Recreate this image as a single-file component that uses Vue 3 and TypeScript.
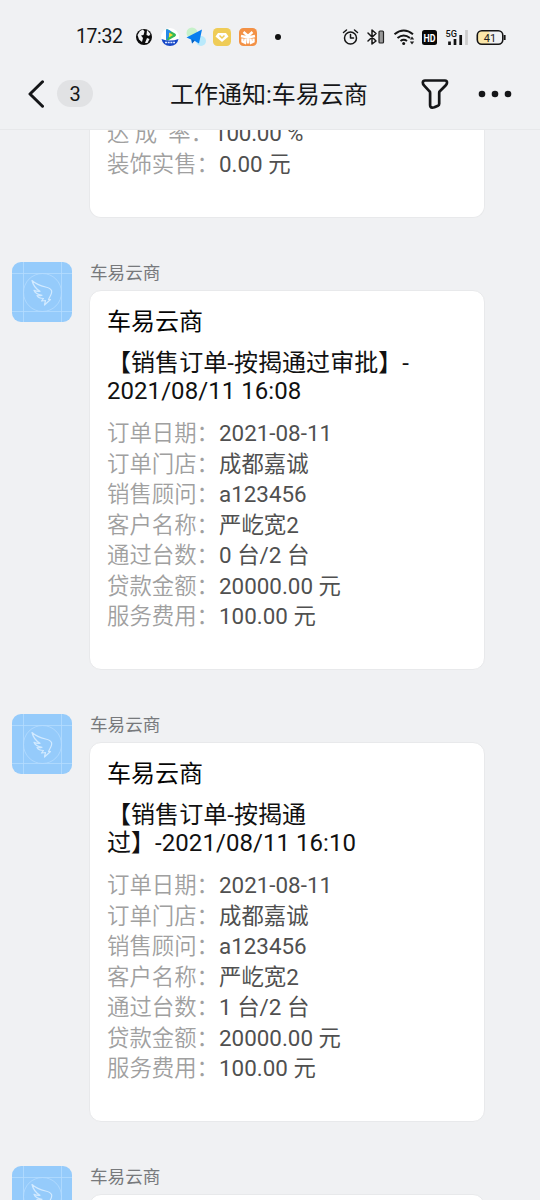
<script setup lang="ts">
interface Row {
  label: string
  value: string
}
interface Message {
  id: number
  title: string[]
  rows: Row[]
}

const sender = '车易云商'

const previousRows: Row[] = [
  { label: '达 成  率：', value: '100.00 %' },
  { label: '装饰实售：', value: '0.00 元' },
]

const orderRows = (passed: string): Row[] => [
  { label: '订单日期：', value: '2021-08-11' },
  { label: '订单门店：', value: '成都嘉诚' },
  { label: '销售顾问：', value: 'a123456' },
  { label: '客户名称：', value: '严屹宽2' },
  { label: '通过台数：', value: passed },
  { label: '贷款金额：', value: '20000.00 元' },
  { label: '服务费用：', value: '100.00 元' },
]

const messages: Message[] = [
  { id: 1, title: ['【销售订单-按揭通过审批】-', '2021/08/11 16:08'], rows: orderRows('0 台/2 台') },
  { id: 2, title: ['【销售订单-按揭通', '过】-2021/08/11 16:10'], rows: orderRows('1 台/2 台') },
  { id: 3, title: [], rows: [] },
]
</script>

<template>
  <div class="screen">
    <div class="status">
      <span class="clock">17:32</span>
      <svg class="apps" width="140" height="20" viewBox="0 0 140 20">
        <circle cx="9" cy="10" r="8" fill="#0b0b0b" />
        <path d="M5 4l3-1.500 1.500 2L8.500 8 6 8.500 8 11l-1 4-3-2.500L2.500 8zM12 3l3.500 4-1.500 2-2.500-1zM12 11l2.500 1-2 4-2.500 0z" fill="#f0f1f3" />
        <circle cx="35" cy="10" r="9" fill="#fff" />
        <path d="M31 3.500q0-2 2-1l7 4q2 1.500 0 3l-7 4q-2 .5-2-1.500z" fill="#35b957" />
        <path d="M31 3.500q0-2 2-1l3 1.800-4 8.700q-1-.3-1-1z" fill="#2789e8" />
        <path d="M34 5.500v5l4-2.500z" fill="#f8d935" />
        <path d="M26.500 12q8.500 3 17 0-1.500 7-8.500 7t-8.500-7z" fill="#1647c6" />
        <path d="M30 15.500h10" stroke="#dce7ff" stroke-width="1.500" stroke-dasharray="2 .7" />
        <circle cx="57" cy="6" r="5.500" fill="#c6f1c9" />
        <circle cx="66" cy="14" r="5" fill="#b9e9fb" />
        <path d="M51.500 10.500L67 2.500l-3 14-5-3-2 3-1-4z" fill="#087ff0" />
        <path d="M57 12.500l3 1-3 3z" fill="#0960bd" />
        <rect x="78" y="1" width="18" height="18" rx="4.500" fill="#efcc57" />
        <path d="M83 6h8l2.500 3.500L87 15l-6.500-5.500z" fill="#fff" />
        <path d="M84.500 8.500L87 11l2.500-2.500" fill="none" stroke="#efcc57" stroke-width="1.500" />
        <rect x="104" y="1" width="18" height="18" rx="4.500" fill="#f39145" />
        <g fill="none" stroke="#fff" stroke-width="2.400">
          <path d="M108.500 5l4.500 4 4.500-4M106 9l7 1.500 7-1.500M113 9v7.500M107.500 11.500v3l2.500 1.200.5-4M118.500 11.500v3l-2.500 1.200-.5-4" />
        </g>
      </svg>
      <i class="more-dot"></i>
      <svg class="system" width="166" height="22" viewBox="0 0 166 22">
        <g fill="none" stroke="#151515" stroke-width="1.500" stroke-linecap="round" stroke-linejoin="round">
          <circle cx="8.500" cy="12" r="6" />
          <path d="M8.500 8.500V12h3M1.500 6.500L4.500 4M12.500 4l3 2.500" />
          <path d="M26 7l8 8-4 3V4l4 3.500-8 7.500" />
        </g>
        <rect x="37" y="5" width="4.500" height="12" rx="1" fill="#999" stroke="#222" stroke-width="1.200" />
        <path d="M52.500 8.200q9.300-7.500 18.500 0M55.500 12q6.200-5 12.500 0M58.500 15q3.200-2.500 6.500 0" fill="none" stroke="#151515" stroke-width="2" />
        <circle cx="61.700" cy="17.500" r="1.500" fill="#151515" />
        <path d="M67.800 13.500l2.200-3 2.200 3zM67.800 15.500l2.200 3 2.200-3z" fill="#222" />
        <rect x="80" y="4" width="15" height="15" rx="2.500" fill="#080808" />
        <text x="87.500" y="15.500" text-anchor="middle" font-size="10.500" font-weight="700" textLength="12" lengthAdjust="spacingAndGlyphs" fill="#fff">HD</text>
        <text x="103.500" y="11" font-size="9.500" font-weight="500" textLength="11.500" lengthAdjust="spacingAndGlyphs" fill="#111">5G</text>
        <path d="M107.500 15.500V19M113 13v6M118.700 9v10" stroke="#111" stroke-width="2.700" />
        <path d="M124.500 4v15" stroke="#ccc" stroke-width="2.700" />
        <rect x="136" y="4.800" width="12" height="13.400" rx="4" fill="#fbe7a9" />
        <rect x="135.300" y="4.800" width="25.500" height="13.400" rx="4.500" fill="none" stroke="#151515" stroke-width="1.600" />
        <path d="M162.700 9v5" stroke="#151515" stroke-width="1.800" />
        <text x="148" y="15.500" text-anchor="middle" font-size="11" fill="#222">41</text>
      </svg>
    </div>

    <header class="nav">
      <svg class="back" width="17" height="28" viewBox="0 0 17 28">
        <path d="M15.500 1.800L3 14l12.500 12.200" fill="none" stroke="#151618" stroke-width="3" stroke-linecap="round" stroke-linejoin="round" />
      </svg>
      <span class="count">3</span>
      <h1>工作通知:车易云商</h1>
      <svg class="filter" width="28" height="32" viewBox="0 0 28 32">
        <path d="M4 2.500h20q2.200 0 2 2.300-.2 1.500-1.200 2.500l-6 6q-.6.600-.6 1.500v11q0 1.400-1.300 2l-3.500 1.500q-2.900 1-3.900-.5-.4-.7-.4-1.800V14.800q0-.9-.6-1.500l-5.500-6Q1.800 6.300 1.800 4.600 2 2.500 4 2.500z" fill="none" stroke="#151618" stroke-width="2.700" stroke-linejoin="round" />
      </svg>
      <svg class="dots" width="34" height="8" viewBox="0 0 34 8">
        <circle cx="4" cy="4" r="3.300" /><circle cx="17" cy="4" r="3.300" /><circle cx="30" cy="4" r="3.300" />
      </svg>
    </header>

    <main class="chat">
      <section class="card card-cut">
        <div v-for="row in previousRows" :key="row.label" class="row">
          <span class="label">{{ row.label }}</span><span class="value">{{ row.value }}</span>
        </div>
      </section>

      <article v-for="message in messages" :key="message.id" class="message">
        <svg class="avatar" width="60" height="60" viewBox="0 0 60 60">
          <rect width="60" height="60" rx="9" fill="#95cbfb" />
          <g fill="none" stroke="#b5dcff" stroke-width=".8">
            <path d="M0 11.500h60M0 49.500h60M11.500 0v60M49.500 0v60" />
            <circle cx="30.500" cy="30.500" r="19" />
          </g>
          <path d="M20 18.500q5 4.500 13.500 6.500 5 1.200 6 3.500.8 2-1.500 6l-1.500 3h2L32.500 43l1-4.500-4 .5 2-2.500q-5 0-6.500-3 3 .6 5-.2-6.500-1-8-5 3 1.500 6 1-6.500-4-8-10.800z" fill="none" stroke="#d2eaff" stroke-width="1.200" stroke-linejoin="round" />
        </svg>
        <div class="body">
          <div class="sender">{{ sender }}</div>
          <section class="card">
            <h2>{{ sender }}</h2>
            <h3><span v-for="line in message.title" :key="line">{{ line }}</span></h3>
            <div v-for="row in message.rows" :key="row.label" class="row">
              <span class="label">{{ row.label }}</span><span class="value">{{ row.value }}</span>
            </div>
          </section>
        </div>
      </article>
    </main>
  </div>
</template>

<style>
body {
  background: #f0f1f3;
}
</style>

<style scoped>
.screen {
  width: 540px;
  height: 1200px;
  overflow: hidden;
  display: flex;
  flex-direction: column;
  background: #f0f1f3;
  color: #151618;
  font-family: Roboto, "Noto Sans CJK SC", sans-serif;
}
.status {
  height: 62px;
  flex: none;
  box-sizing: border-box;
  padding: 11px 0 0 76px;
  display: flex;
  align-items: center;
}
.clock {
  width: 59px;
  font-size: 19.500px;
  line-height: 24px;
  letter-spacing: -0.4px;
}
.apps,
.system,
.clock,
.more-dot {
  flex: none;
}
.more-dot {
  width: 6px;
  height: 6px;
  border-radius: 50%;
  background: #111;
}
.system {
  margin-left: 61px;
}
.nav {
  height: 68px;
  flex: none;
  box-sizing: border-box;
  display: flex;
  align-items: center;
  padding: 0 0 4px 27px;
  border-bottom: 1px solid #e7e8ea;
}
.nav > * {
  flex: none;
}
.count {
  width: 36px;
  height: 27px;
  margin-left: 13px;
  border-radius: 14px;
  background: #e1e2e4;
  font-size: 20px;
  line-height: 28px;
  text-align: center;
}
h1 {
  width: 200px;
  margin: 3px 0 0 77px;
  font-size: 24px;
  line-height: 34px;
  font-weight: 400;
  white-space: nowrap;
}
.filter {
  margin-left: 51px;
}
.dots {
  margin-left: 29px;
  fill: #151618;
}
.chat {
  flex: 1;
  min-height: 0;
  overflow: hidden;
}
.card {
  box-sizing: border-box;
  width: 396px;
  height: 380px;
  padding: 13px 16px 0 17px;
  border: 1px solid #e8e9eb;
  border-radius: 12px;
  background: #fff;
}
.card-cut {
  height: 100px;
  margin: -12px 0 44px 89px;
  padding-top: 0;
  border-top: 0;
  border-radius: 0 0 12px 12px;
}
.message {
  display: flex;
  height: 452px;
  padding-left: 12px;
}
.avatar {
  flex: none;
}
.body {
  margin-left: 17px;
}
.sender {
  height: 27px;
  padding: 1px 0 0 1px;
  font-size: 17.6px;
  line-height: 20px;
  color: #77797c;
}
h2 {
  margin: 0;
  font-size: 24px;
  line-height: 36px;
  font-weight: 400;
  color: #050505;
}
h3 {
  margin: 9px 0 13px;
  font-size: 24px;
  line-height: 28px;
  letter-spacing: 0.05px;
  font-weight: 400;
  color: #111;
}
h3 span {
  display: block;
  white-space: nowrap;
}
.row {
  display: flex;
  height: 30.500px;
  font-size: 22.400px;
  line-height: 30.500px;
  white-space: pre;
}
.label {
  width: 112px;
  flex: none;
  color: #a0a0a0;
  font-weight: 350;
}
.card-cut .row:first-child .label {
  width: 107px;
}
.card-cut .row:first-child .value {
  letter-spacing: -0.2px;
}
.value {
  color: #505050;
}
</style>
